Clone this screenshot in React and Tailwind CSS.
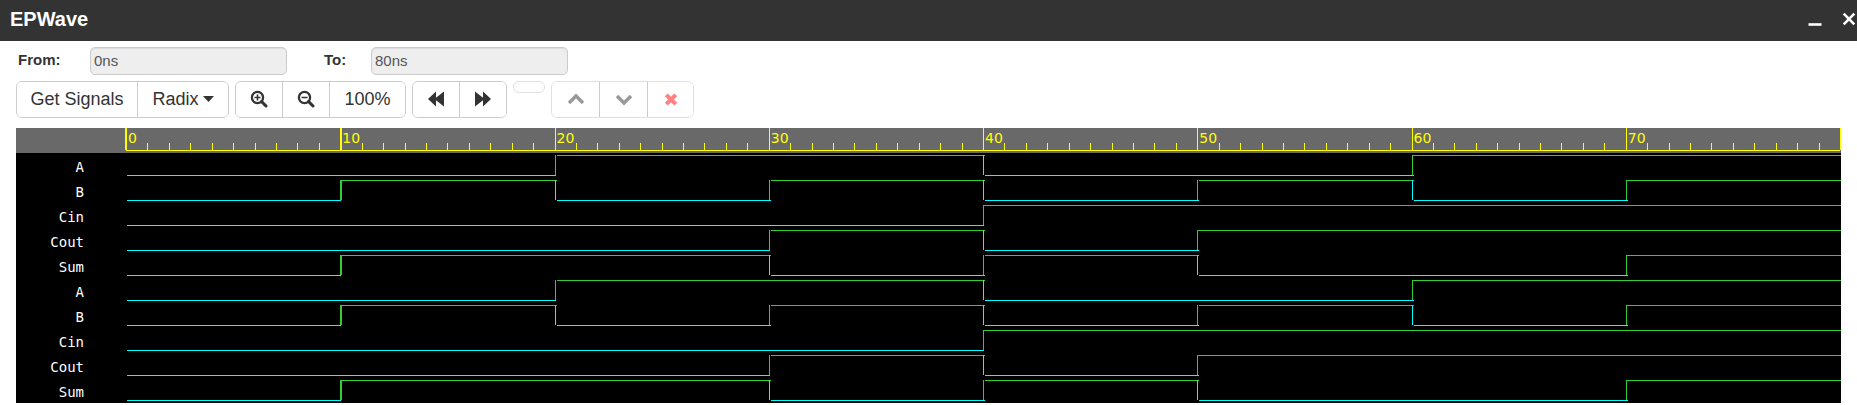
const SPAN = 80;

const SIGNALS = [
  { name: 'A', toggles: [20, 40, 60] },
  { name: 'B', toggles: [10, 20, 30, 40, 50, 60, 70] },
  { name: 'Cin', toggles: [40] },
  { name: 'Cout', toggles: [30, 40, 50] },
  { name: 'Sum', toggles: [10, 30, 40, 50, 70] },
];
const ROWS = [...SIGNALS, ...SIGNALS];

const LOW = '#00ffff';
const HIGH = '#32cd32';
const pct = (t) => `${(t / SPAN) * 100}%`;

function Ruler() {
  const ticks = Array.from({ length: SPAN + 1 }, (_, t) => t);
  return (
    <svg className="block h-[25px] w-full overflow-visible" shapeRendering="crispEdges" role="img" aria-label="Time ruler">
      {ticks.map((t) => {
        const major = t % 10 === 0;
        return (
          <rect
            key={t}
            x={pct(t)}
            y={major ? 0 : 15}
            width={t === 0 || t === 10 ? 2 : 1}
            height={major ? 22 : 7}
            fill="#ffff00"
            transform={t === 0 ? 'translate(-1 0)' : undefined}
          />
        );
      })}
      <rect x="0" y="22" width="100%" height="1" fill="#ffff00" />
      {ticks.filter((t) => t % 10 === 0 && t < SPAN).map((t) => (
        <text key={t} x={pct(t)} y="15" dx="2" fill="#ffff00" className="font-['DejaVu_Sans',sans-serif] text-[14px]">
          {t}
        </text>
      ))}
    </svg>
  );
}

function Wave({ name, toggles }) {
  const edges = [0, ...toggles, SPAN];
  const last = edges.length - 2;
  return (
    <svg className="block h-[25px] w-full overflow-visible" shapeRendering="crispEdges" role="img" aria-label={`${name} waveform`}>
      {edges.slice(0, -1).map((from, i) => {
        const high = i % 2 === 1;
        const color = high ? HIGH : LOW;
        return (
          <g key={from}>
            <rect
              x={pct(from)}
              y={high ? 2 : 22}
              width={pct(edges[i + 1] - from)}
              height="1"
              fill={color}
              transform={i === 0 || i === last ? 'translate(1 0)' : 'translate(2 0)'}
            />
            {i > 0 && <rect x={pct(from)} y="2" width={from === 10 ? 2 : 1} height="20" fill={color} />}
          </g>
        );
      })}
    </svg>
  );
}

function Glyph({ children }) {
  return (
    <svg viewBox="0 0 18 18" className="h-[18px] w-[18px]" fill="currentColor" aria-hidden="true">
      {children}
    </svg>
  );
}

function Magnifier({ plus }) {
  return (
    <Glyph>
      <circle cx="7.5" cy="7.5" r="5.6" fill="none" stroke="currentColor" strokeWidth="2.3" />
      <path d="M11.6 11.6 L16 16" stroke="currentColor" strokeWidth="3" strokeLinecap="round" />
      <path d={plus ? 'M4.5 7.5h6M7.5 4.5v6' : 'M4.5 7.5h6'} stroke="currentColor" strokeWidth="1.6" />
    </Glyph>
  );
}

function Group({ children, disabled }) {
  return (
    <div className={`flex h-[37px] divide-x divide-[#ccc] overflow-hidden rounded-md border ${disabled ? 'border-[#e0e0e0]' : 'border-[#ccc]'}`}>
      {children}
    </div>
  );
}

function Tool({ children, label, disabled, className }) {
  return (
    <button type="button" aria-label={label} disabled={disabled} className={`flex items-center justify-center bg-white pb-[2px] ${className}`}>
      {children}
    </button>
  );
}

function Field({ id, label, value, labelClass }) {
  return (
    <div className="flex">
      <label htmlFor={id} className={`pt-[2px] font-bold ${labelClass}`}>{label}</label>
      <input
        id={id}
        readOnly
        value={value}
        className="h-7 w-[197px] rounded-[5px] border border-[#ccc] bg-[#eee] px-[3px] pb-[2px] text-[#555] shadow-[inset_0_1px_1px_rgba(0,0,0,0.075)] outline-none"
      />
    </div>
  );
}

export default function App() {
  return (
    <div className="bg-white font-['Liberation_Sans',Arial,sans-serif] text-[15px] leading-[22px] text-[#333]">
      <header className="flex h-[41px] items-center justify-between bg-[#333] pb-[4px] pl-[10px] text-white">
        <h1 className="text-[20px] font-bold">EPWave</h1>
        <div className="flex">
          <button type="button" aria-label="Minimize" className="flex w-[34px] justify-center">
            <svg viewBox="0 0 14 14" className="h-[14px] w-[14px]" aria-hidden="true">
              <path d="M0.5 12.5h13" stroke="currentColor" strokeWidth="2.6" />
            </svg>
          </button>
          <button type="button" aria-label="Close" className="flex w-[25px] justify-end pr-px">
            <svg viewBox="0 0 14 14" className="h-[14px] w-[14px]" aria-hidden="true">
              <path d="M1.7 1.7 L12.3 12.3 M12.3 1.7 L1.7 12.3" stroke="currentColor" strokeWidth="2.6" />
            </svg>
          </button>
        </div>
      </header>

      <main className="px-4 pt-[6px]">
        <form className="flex gap-[37px]">
          <Field id="from" label="From:" value="0ns" labelClass="w-[74px] pl-[2px]" />
          <Field id="to" label="To:" value="80ns" labelClass="w-[47px]" />
        </form>

        <div className="flex items-start gap-[6px] pt-[6px] text-[18px]">
          <Group>
            <Tool className="w-[121px]">Get Signals</Tool>
            <Tool className="w-[90px] gap-1">
              Radix
              <svg viewBox="0 0 11 6" className="h-[6px] w-[11px]" fill="currentColor" aria-hidden="true">
                <path d="M0 0h11L5.5 6z" />
              </svg>
            </Tool>
          </Group>
          <Group>
            <Tool label="Zoom in" className="w-[47px]"><Magnifier plus /></Tool>
            <Tool label="Zoom out" className="w-[47px]"><Magnifier /></Tool>
            <Tool className="w-[75px]">100%</Tool>
          </Group>
          <Group>
            <Tool label="Scroll left" className="w-[47px]">
              <Glyph><path d="M9 1.5v6.3L17 1.5v15L9 10.2v6.3L1 9z" /></Glyph>
            </Tool>
            <Tool label="Scroll right" className="w-[46px]">
              <Glyph><path d="M9 1.5v6.3L1 1.5v15L9 10.2v6.3L17 9z" /></Glyph>
            </Tool>
          </Group>
          <button type="button" aria-label="Cursor value" disabled className="h-3 w-8 rounded-md border border-[#e0e0e0]" />
          <Group disabled>
            <Tool label="Move up" disabled className="w-[48px] text-[#999]">
              <Glyph><path d="M2 13l7-7 7 7" fill="none" stroke="currentColor" strokeWidth="3.4" /></Glyph>
            </Tool>
            <Tool label="Move down" disabled className="w-[48px] text-[#999]">
              <Glyph><path d="M2 6l7 7 7-7" fill="none" stroke="currentColor" strokeWidth="3.4" /></Glyph>
            </Tool>
            <Tool label="Remove" disabled className="w-[45px] text-[#ff8080]">
              <Glyph><path d="M4.3 4.8l9.4 9.4M13.7 4.8l-9.4 9.4" stroke="currentColor" strokeWidth="4" /></Glyph>
            </Tool>
          </Group>
        </div>

        <section aria-label="Waveforms" className="mt-[10px] bg-black">
          <div className="bg-[#696969] pl-[110px] pr-px">
            <Ruler />
          </div>
          {ROWS.map((row, i) => (
            <div key={i} className="flex h-[25px] pr-px">
              <div className="w-[110px] shrink-0 pr-[42px] pt-[3px] text-right font-['DejaVu_Sans_Mono',monospace] text-[14px] text-white">
                {row.name}
              </div>
              <div className="min-w-0 grow">
                <Wave {...row} />
              </div>
            </div>
          ))}
        </section>
      </main>
    </div>
  );
}
